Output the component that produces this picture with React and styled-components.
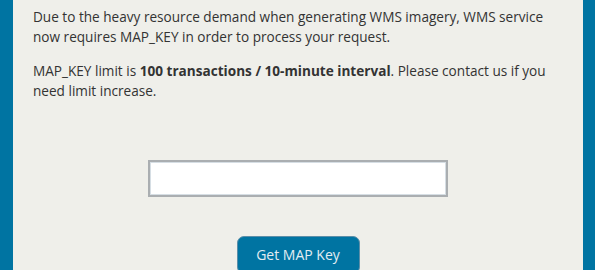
import React from "react";
import styled, { createGlobalStyle } from "styled-components";

const Global = createGlobalStyle`
  html, body { margin: 0; padding: 0; overflow: hidden; }
  body { font-family: "Open Sans", "Noto Sans", sans-serif; background: #0074a2; }
`;

const Frame = styled.div`
  background: #0074a2;
  padding: 0 12px 0 13px;
  height: 270px;
  box-sizing: border-box;
`;

const Panel = styled.div`
  background: #efefea;
  height: 100%;
  padding: 7px 20px 0 20px;
  box-sizing: border-box;
  display: flex;
  flex-direction: column;
  align-items: stretch;
`;

const Para = styled.p`
  margin: 0 0 14px;
  font-size: 13.6px;
  line-height: 20px;
  color: #333333;
  strong { font-weight: 700; }
`;

const Field = styled.div`
  display: flex;
  justify-content: center;
  margin-top: 45px;
`;

const Input = styled.input`
  width: 300px;
  height: 37px;
  box-sizing: border-box;
  border: 2px solid #aaaeb1;
  box-shadow: inset 0 0 0 1px #d6dee4;
  background: #ffffff;
  outline: none;
  font-family: inherit;
  font-size: 14px;
  padding: 0 6px;
`;

const Actions = styled.div`
  display: flex;
  justify-content: center;
  margin-top: 39px;
`;

const Button = styled.button`
  width: 123px;
  height: 38px;
  box-sizing: border-box;
  background: #0074a2;
  border: 1px solid #5c8ea8;
  border-radius: 7px;
  color: #e3edf2;
  font-family: inherit;
  font-size: 14px;
  padding: 0 0 2px;
  cursor: pointer;
`;

export default function App() {
  return (
    <>
      <Global />
      <Frame>
        <Panel>
          <Para>
            Due to the heavy resource demand when generating WMS imagery, WMS service now requires MAP_KEY in order to process your request.
          </Para>
          <Para>
            MAP_KEY limit is <strong>100 transactions / 10-minute interval</strong>. Please contact us if you need limit increase.
          </Para>
          <Field>
            <Input type="text" />
          </Field>
          <Actions>
            <Button>Get MAP Key</Button>
          </Actions>
        </Panel>
      </Frame>
    </>
  );
}
